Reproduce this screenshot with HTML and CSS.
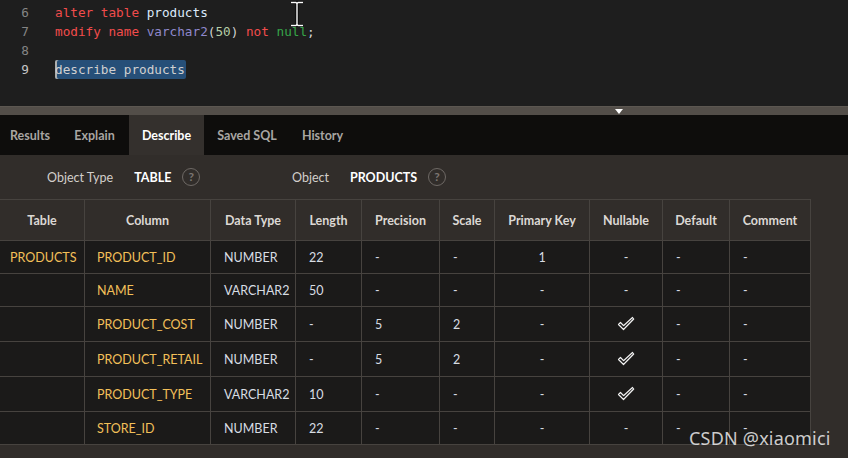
FILE: index.html
```html
<!DOCTYPE html>
<html>
<head>
<meta charset="utf-8">
<link rel="stylesheet" href="styles.css">
</head>
<body>
<div class="page">
  <div class="editor">
    <div class="line"><span class="ln">6</span><span class="code"><span class="kw">alter table</span> <span class="id">products</span></span></div>
    <div class="line"><span class="ln">7</span><span class="code"><span class="kw">modify name</span> <span class="ty">varchar2</span><span class="pn">(</span><span class="num">50</span><span class="pn">)</span> <span class="kw">not</span> <span class="nl">null</span><span class="pn">;</span></span></div>
    <div class="line"><span class="ln">8</span><span class="code"></span></div>
    <div class="line current"><span class="ln">9</span><span class="code"><span class="sel">describe products</span></span></div>
    <svg class="ibeam" width="16" height="26" viewBox="0 0 16 26">
      <path d="M2 1.5h5l1 1 1-1h5M8 2.5v21M2 24.5h5l1-1 1 1h5" fill="none" stroke="#000" stroke-width="3"/>
      <path d="M2 1.5h5l1 1 1-1h5M8 2.5v21M2 24.5h5l1-1 1 1h5" fill="none" stroke="#fff" stroke-width="1.4"/>
    </svg>
  </div>
  <div class="splitter"><span class="tri"></span></div>
  <div class="tabs">
    <div class="tab w1">Results</div>
    <div class="tab w2">Explain</div>
    <div class="tab w3 active">Describe</div>
    <div class="tab w4">Saved SQL</div>
    <div class="tab w5">History</div>
  </div>
  <div class="objrow">
    <div class="group g1">
      <span class="lbl">Object Type</span>
      <span class="val">TABLE</span>
      <span class="help">?</span>
    </div>
    <div class="group g2">
      <span class="lbl">Object</span>
      <span class="val">PRODUCTS</span>
      <span class="help">?</span>
    </div>
  </div>
  <div class="tablewrap">
    <table class="desc">
      <colgroup>
        <col class="c1"><col class="c2"><col class="c3"><col class="c4"><col class="c5">
        <col class="c6"><col class="c7"><col class="c8"><col class="c9"><col class="c10">
      </colgroup>
      <thead>
        <tr>
          <th>Table</th><th>Column</th><th>Data Type</th><th>Length</th><th>Precision</th>
          <th>Scale</th><th>Primary Key</th><th>Nullable</th><th>Default</th><th>Comment</th>
        </tr>
      </thead>
      <tbody>
        <tr class="r33">
          <td class="tbl">PRODUCTS</td><td class="col">PRODUCT_ID</td><td>NUMBER</td><td>22</td><td>-</td>
          <td>-</td><td class="ctr">1</td><td class="ctr">-</td><td>-</td><td>-</td>
        </tr>
        <tr class="r33">
          <td class="tbl"></td><td class="col">NAME</td><td>VARCHAR2</td><td>50</td><td>-</td>
          <td>-</td><td class="ctr">-</td><td class="ctr">-</td><td>-</td><td>-</td>
        </tr>
        <tr class="r35">
          <td class="tbl"></td><td class="col">PRODUCT_COST</td><td>NUMBER</td><td>-</td><td>5</td>
          <td>2</td><td class="ctr">-</td><td class="ctr"><svg class="chk" width="18" height="15" viewBox="0 0 18 15"><path d="M1.5 8.5l2-2 3 3.2 9-8.2 1.2 1.5-10.2 10.5z" fill="none" stroke="#f2f2f2" stroke-width="1.2" stroke-linejoin="round"/></svg></td><td>-</td><td>-</td>
        </tr>
        <tr class="r35">
          <td class="tbl"></td><td class="col">PRODUCT_RETAIL</td><td>NUMBER</td><td>-</td><td>5</td>
          <td>2</td><td class="ctr">-</td><td class="ctr"><svg class="chk" width="18" height="15" viewBox="0 0 18 15"><path d="M1.5 8.5l2-2 3 3.2 9-8.2 1.2 1.5-10.2 10.5z" fill="none" stroke="#f2f2f2" stroke-width="1.2" stroke-linejoin="round"/></svg></td><td>-</td><td>-</td>
        </tr>
        <tr class="r35">
          <td class="tbl"></td><td class="col">PRODUCT_TYPE</td><td>VARCHAR2</td><td>10</td><td>-</td>
          <td>-</td><td class="ctr">-</td><td class="ctr"><svg class="chk" width="18" height="15" viewBox="0 0 18 15"><path d="M1.5 8.5l2-2 3 3.2 9-8.2 1.2 1.5-10.2 10.5z" fill="none" stroke="#f2f2f2" stroke-width="1.2" stroke-linejoin="round"/></svg></td><td>-</td><td>-</td>
        </tr>
        <tr class="r33">
          <td class="tbl"></td><td class="col">STORE_ID</td><td>NUMBER</td><td>22</td><td>-</td>
          <td>-</td><td class="ctr">-</td><td class="ctr">-</td><td>-</td><td>-</td>
        </tr>
      </tbody>
    </table>
  </div>
  <div class="watermark">CSDN @xiaomici</div>
</div>
</body>
</html>
```
FILE: styles.css
```css
html, body {
  margin: 0;
  padding: 0;
  background: #312d2a;
}
.page {
  position: relative;
  width: 848px;
  height: 458px;
  overflow: hidden;
  background: #312d2a;
  font-family: Lato, "Noto Sans", sans-serif;
}
.editor {
  position: relative;
  height: 106px;
  background: #1e1e1e;
  padding-top: 3px;
  box-sizing: border-box;
  font-family: "DejaVu Sans Mono", "Liberation Mono", monospace;
  font-size: 12.7px;
}
.line {
  display: flex;
  height: 19px;
  line-height: 19px;
}
.ln {
  width: 29px;
  text-align: right;
  color: #858585;
  flex: none;
}
.current .ln {
  color: #c6c6c6;
}
.code {
  margin-left: 26px;
  color: #d4d4d4;
  white-space: pre;
}
.kw { color: #f14c4c; }
.id { color: #dbe9f9; }
.ty { color: #8f88cc; }
.pn { color: #d4d4d4; }
.num { color: #b5cea8; }
.nl { color: #36a549; }
.sel {
  display: inline-block;
  background: #264f78;
  color: #d0d0d0;
  border-radius: 2px;
  line-height: 19px;
  padding-right: 1px;
  box-shadow: inset 2px 0 0 #aeafad;
}
.ibeam {
  position: absolute;
  left: 289px;
  top: 1px;
}
.splitter {
  height: 9px;
  background: #534e49;
  position: relative;
  border-top: 1px solid #5c5751;
  box-sizing: border-box;
}
.tri {
  position: absolute;
  left: 615px;
  top: 2px;
  width: 0;
  height: 0;
  border-left: 4.5px solid transparent;
  border-right: 4.5px solid transparent;
  border-top: 5px solid #ffffff;
}
.tabs {
  display: flex;
  height: 40px;
  background: #0e0d0c;
}
.tab {
  display: flex;
  align-items: center;
  justify-content: center;
  font-weight: 700;
  font-size: 12.5px;
  color: #a8a5a2;
  flex: none;
}
.tab.active {
  background: #34302d;
  color: #ffffff;
}
.w1 { width: 60px; }
.w2 { width: 69px; }
.w3 { width: 75px; }
.w4 { width: 86px; }
.w5 { width: 65px; }
.objrow {
  height: 44px;
  display: flex;
  align-items: center;
  padding-left: 47px;
  background: #312d2a;
  font-size: 12.5px;
}
.group {
  display: flex;
  align-items: center;
}
.g1 { width: 245px; }
.lbl {
  color: #d3cfcb;
}
.val {
  color: #ffffff;
  font-weight: 700;
  margin-left: 21px;
}
.help {
  margin-left: 11px;
  width: 16px;
  height: 16px;
  border: 1.3px solid #6e6965;
  border-radius: 50%;
  color: #7b7672;
  font-size: 12px;
  font-weight: 700;
  display: flex;
  align-items: center;
  justify-content: center;
  line-height: 1;
}
.tablewrap {
  background: #312d2a;
}
.desc {
  border-collapse: collapse;
  table-layout: fixed;
  width: 811px;
  margin-left: -1px;
  font-size: 12.5px;
}
.desc th, .desc td {
  border: 1px solid #47433f;
  padding: 0 0 0 13px;
  white-space: nowrap;
  overflow: hidden;
}
.desc th {
  height: 40px;
  background: #312d2a;
  color: #dcd8d4;
  font-weight: 700;
  text-align: center;
  padding: 0;
}
.desc td {
  background: #1b1a19;
  color: #d8dde3;
  text-align: left;
}
.r33 td { height: 32px; }
.r35 td { height: 34px; }
.desc td.tbl {
  color: #f3c059;
  padding-left: 10px;
}
.desc td.col {
  color: #f3c059;
  padding-left: 12px;
}
.desc td.ctr {
  text-align: center;
  padding: 0;
}
.chk {
  display: inline-block;
  vertical-align: middle;
  margin-top: -4px;
}
.c1 { width: 85px; }
.c2 { width: 126px; }
.c3 { width: 85px; }
.c4 { width: 66px; }
.c5 { width: 78px; }
.c6 { width: 55px; }
.c7 { width: 95px; }
.c8 { width: 73px; }
.c9 { width: 67px; }
.c10 { width: 81px; }
.watermark {
  position: absolute;
  left: 689px;
  top: 426px;
  font-family: "Noto Sans", "DejaVu Sans", sans-serif;
  font-size: 18px;
  color: rgba(255, 255, 255, 0.78);
  letter-spacing: 0.2px;
}
```
